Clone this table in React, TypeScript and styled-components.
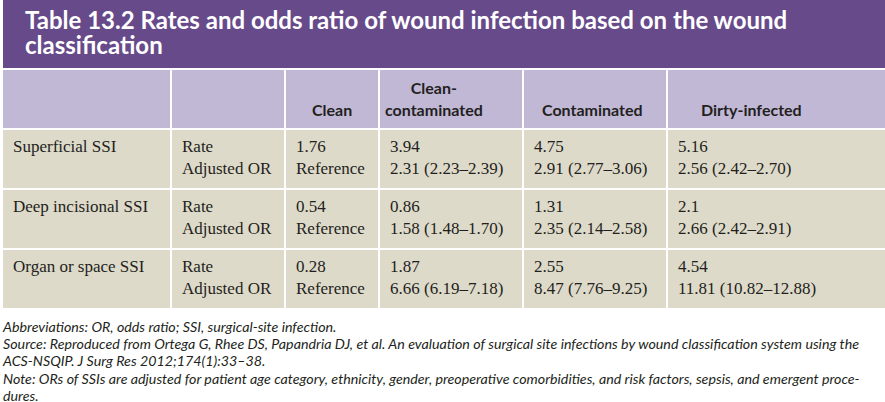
import React from "react";
import styled, { createGlobalStyle } from "styled-components";

const GlobalStyle = createGlobalStyle`
  html, body {
    margin: 0;
    padding: 0;
    background: #ffffff;
  }
  body {
    font-family: "Liberation Serif", serif;
    color: #231f20;
  }
`;

const Page = styled.div`
  width: 885px;
  padding-left: 3px;
  box-sizing: border-box;
`;

const TableGrid = styled.div`
  display: grid;
  grid-template-columns: 167px 112px 92px 142px 142px 1fr;
  column-gap: 2px;
  row-gap: 2px;
  background: #ffffff;
`;

const Title = styled.h1`
  grid-column: 1 / -1;
  margin: 0;
  height: 68px;
  box-sizing: border-box;
  padding: 7px 20px 0 22px;
  background: #674a8a;
  color: #ffffff;
  font-family: Lato, "Open Sans", sans-serif;
  font-weight: 700;
  font-size: 24px;
  line-height: 25px;
`;

const HeadCell = styled.div<{ $pl: number }>`
  height: 58px;
  box-sizing: border-box;
  background: #c1b8d6;
  display: flex;
  align-items: flex-end;
  padding: 0 0 7px ${(p) => p.$pl}px;
  font-family: Lato, "Open Sans", sans-serif;
  font-weight: 700;
  font-size: 16px;
  line-height: 22px;
  color: #231f20;
  span {
    text-align: center;
  }
`;

const Cell = styled.div`
  height: 58px;
  box-sizing: border-box;
  background: #dedaca;
  padding: 6px 0 0 10px;
  font-family: "Liberation Serif", serif;
  font-size: 17px;
  line-height: 22px;
  white-space: nowrap;
`;

const Notes = styled.div`
  padding-top: 10px;
  font-family: Lato, "Open Sans", sans-serif;
  font-style: italic;
  font-size: 14.25px;
  line-height: 17.2px;
  color: #231f20;
  white-space: nowrap;
`;

const headers = [
  { label: "", pl: 0 },
  { label: "", pl: 0 },
  { label: "Clean", pl: 26 },
  { label: "Clean-\ncontaminated", pl: 5 },
  { label: "Contaminated", pl: 18 },
  { label: "Dirty-infected", pl: 33 },
];

const rows = [
  {
    name: "Superficial SSI",
    values: [
      ["1.76", "Reference"],
      ["3.94", "2.31 (2.23–2.39)"],
      ["4.75", "2.91 (2.77–3.06)"],
      ["5.16", "2.56 (2.42–2.70)"],
    ],
  },
  {
    name: "Deep incisional SSI",
    values: [
      ["0.54", "Reference"],
      ["0.86", "1.58 (1.48–1.70)"],
      ["1.31", "2.35 (2.14–2.58)"],
      ["2.1", "2.66 (2.42–2.91)"],
    ],
  },
  {
    name: "Organ or space SSI",
    values: [
      ["0.28", "Reference"],
      ["1.87", "6.66 (6.19–7.18)"],
      ["2.55", "8.47 (7.76–9.25)"],
      ["4.54", "11.81 (10.82–12.88)"],
    ],
  },
];

export default function App() {
  return (
    <Page>
      <GlobalStyle />
      <TableGrid>
        <Title>
          Table 13.2 Rates and odds ratio of wound infection based on the wound
          classification
        </Title>
        {headers.map((h, i) => (
          <HeadCell key={i} $pl={h.pl}>
            <span>
              {h.label.split("\n").map((line, j) => (
                <React.Fragment key={j}>
                  {j > 0 && <br />}
                  {line}
                </React.Fragment>
              ))}
            </span>
          </HeadCell>
        ))}
        {rows.map((r) => (
          <React.Fragment key={r.name}>
            <Cell>{r.name}</Cell>
            <Cell>
              Rate
              <br />
              Adjusted OR
            </Cell>
            {r.values.map((v, i) => (
              <Cell key={i}>
                {v[0]}
                <br />
                {v[1]}
              </Cell>
            ))}
          </React.Fragment>
        ))}
      </TableGrid>
      <Notes>
        Abbreviations: OR, odds ratio; SSI, surgical-site infection.
        <br />
        Source: Reproduced from Ortega G, Rhee DS, Papandria DJ, et al. An
        evaluation of surgical site infections by wound classification system
        using the
        <br />
        ACS-NSQIP. J Surg Res 2012;174(1):33–38.
        <br />
        Note: ORs of SSIs are adjusted for patient age category, ethnicity,
        gender, preoperative comorbidities, and risk factors, sepsis, and
        emergent proce-
        <br />
        dures.
      </Notes>
    </Page>
  );
}
